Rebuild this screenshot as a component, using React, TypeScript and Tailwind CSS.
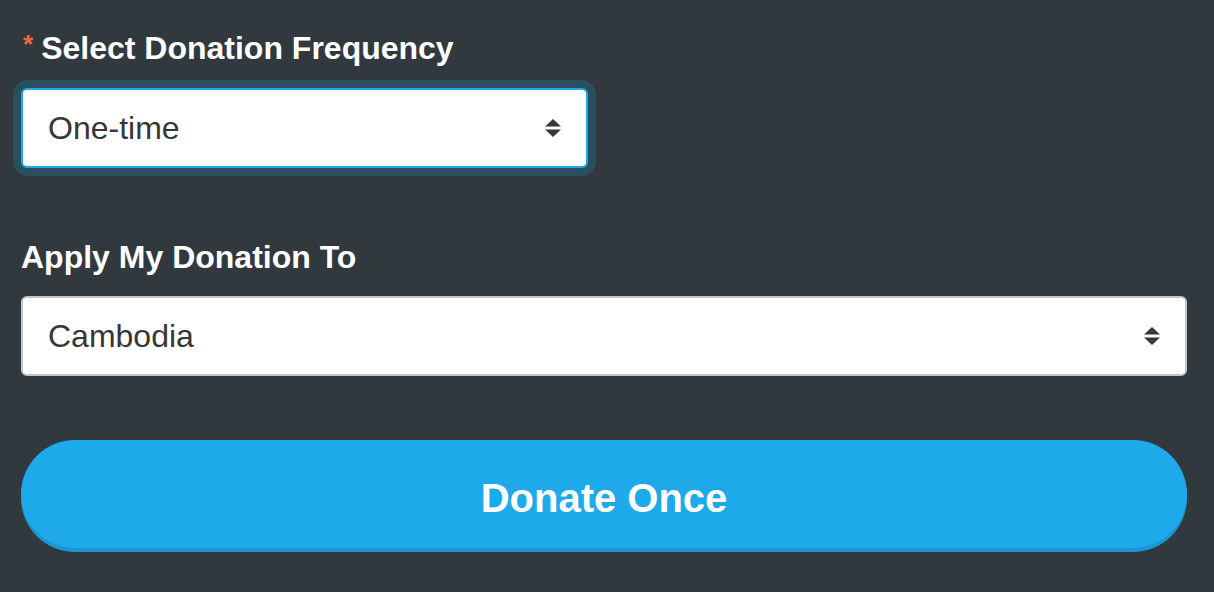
import { useState } from "react";

function Arrows() {
  return (
    <svg width="18" height="20" viewBox="0 0 18 20" className="shrink-0">
      <path d="M9 1 L17 8.5 L1 8.5 Z" fill="#34393e" />
      <path d="M9 19 L17 11.5 L1 11.5 Z" fill="#34393e" />
    </svg>
  );
}

export default function App() {
  const [frequency] = useState("One-time");
  const [fund] = useState("Cambodia");

  return (
    <div
      className="min-h-[592px] w-full bg-[#31393f] pl-[21px] pr-[27px] pt-[29px]"
      style={{ fontFamily: '"Liberation Sans", Arial, sans-serif' }}
    >
      {/* Frequency */}
      <label className="flex items-start text-[32px] font-bold leading-[38px] text-white">
        <span className="mr-[8px] ml-[2px] text-[26px] leading-[30px] text-[#f2693a]">*</span>
        Select Donation Frequency
      </label>
      <div className="mt-[21px] w-[567px] rounded-[7px] shadow-[0_0_0_8px_#2a4f5e]">
        <div className="flex h-[80px] items-center justify-between rounded-[6px] border-2 border-[#1ea9ea] bg-white pl-[25px] pr-[24px]">
          <span className="text-[32px] leading-none text-[#363636]">{frequency}</span>
          <Arrows />
        </div>
      </div>

      {/* Designation */}
      <label className="mt-[70px] block text-[32px] font-bold leading-[38px] text-white">
        Apply My Donation To
      </label>
      <div className="mt-[20px] flex h-[80px] items-center justify-between rounded-[6px] border-2 border-[#c3c7ca] bg-white pl-[25px] pr-[24px]">
        <span className="text-[32px] leading-none text-[#363636]">{fund}</span>
        <Arrows />
      </div>

      {/* Submit */}
      <button className="mt-[64px] flex h-[108px] w-full items-center justify-center rounded-full bg-[#1da9ea] pt-[7px] text-[40px] font-bold text-white shadow-[0_4px_0_#1a96d2]">
        Donate Once
      </button>
    </div>
  );
}
